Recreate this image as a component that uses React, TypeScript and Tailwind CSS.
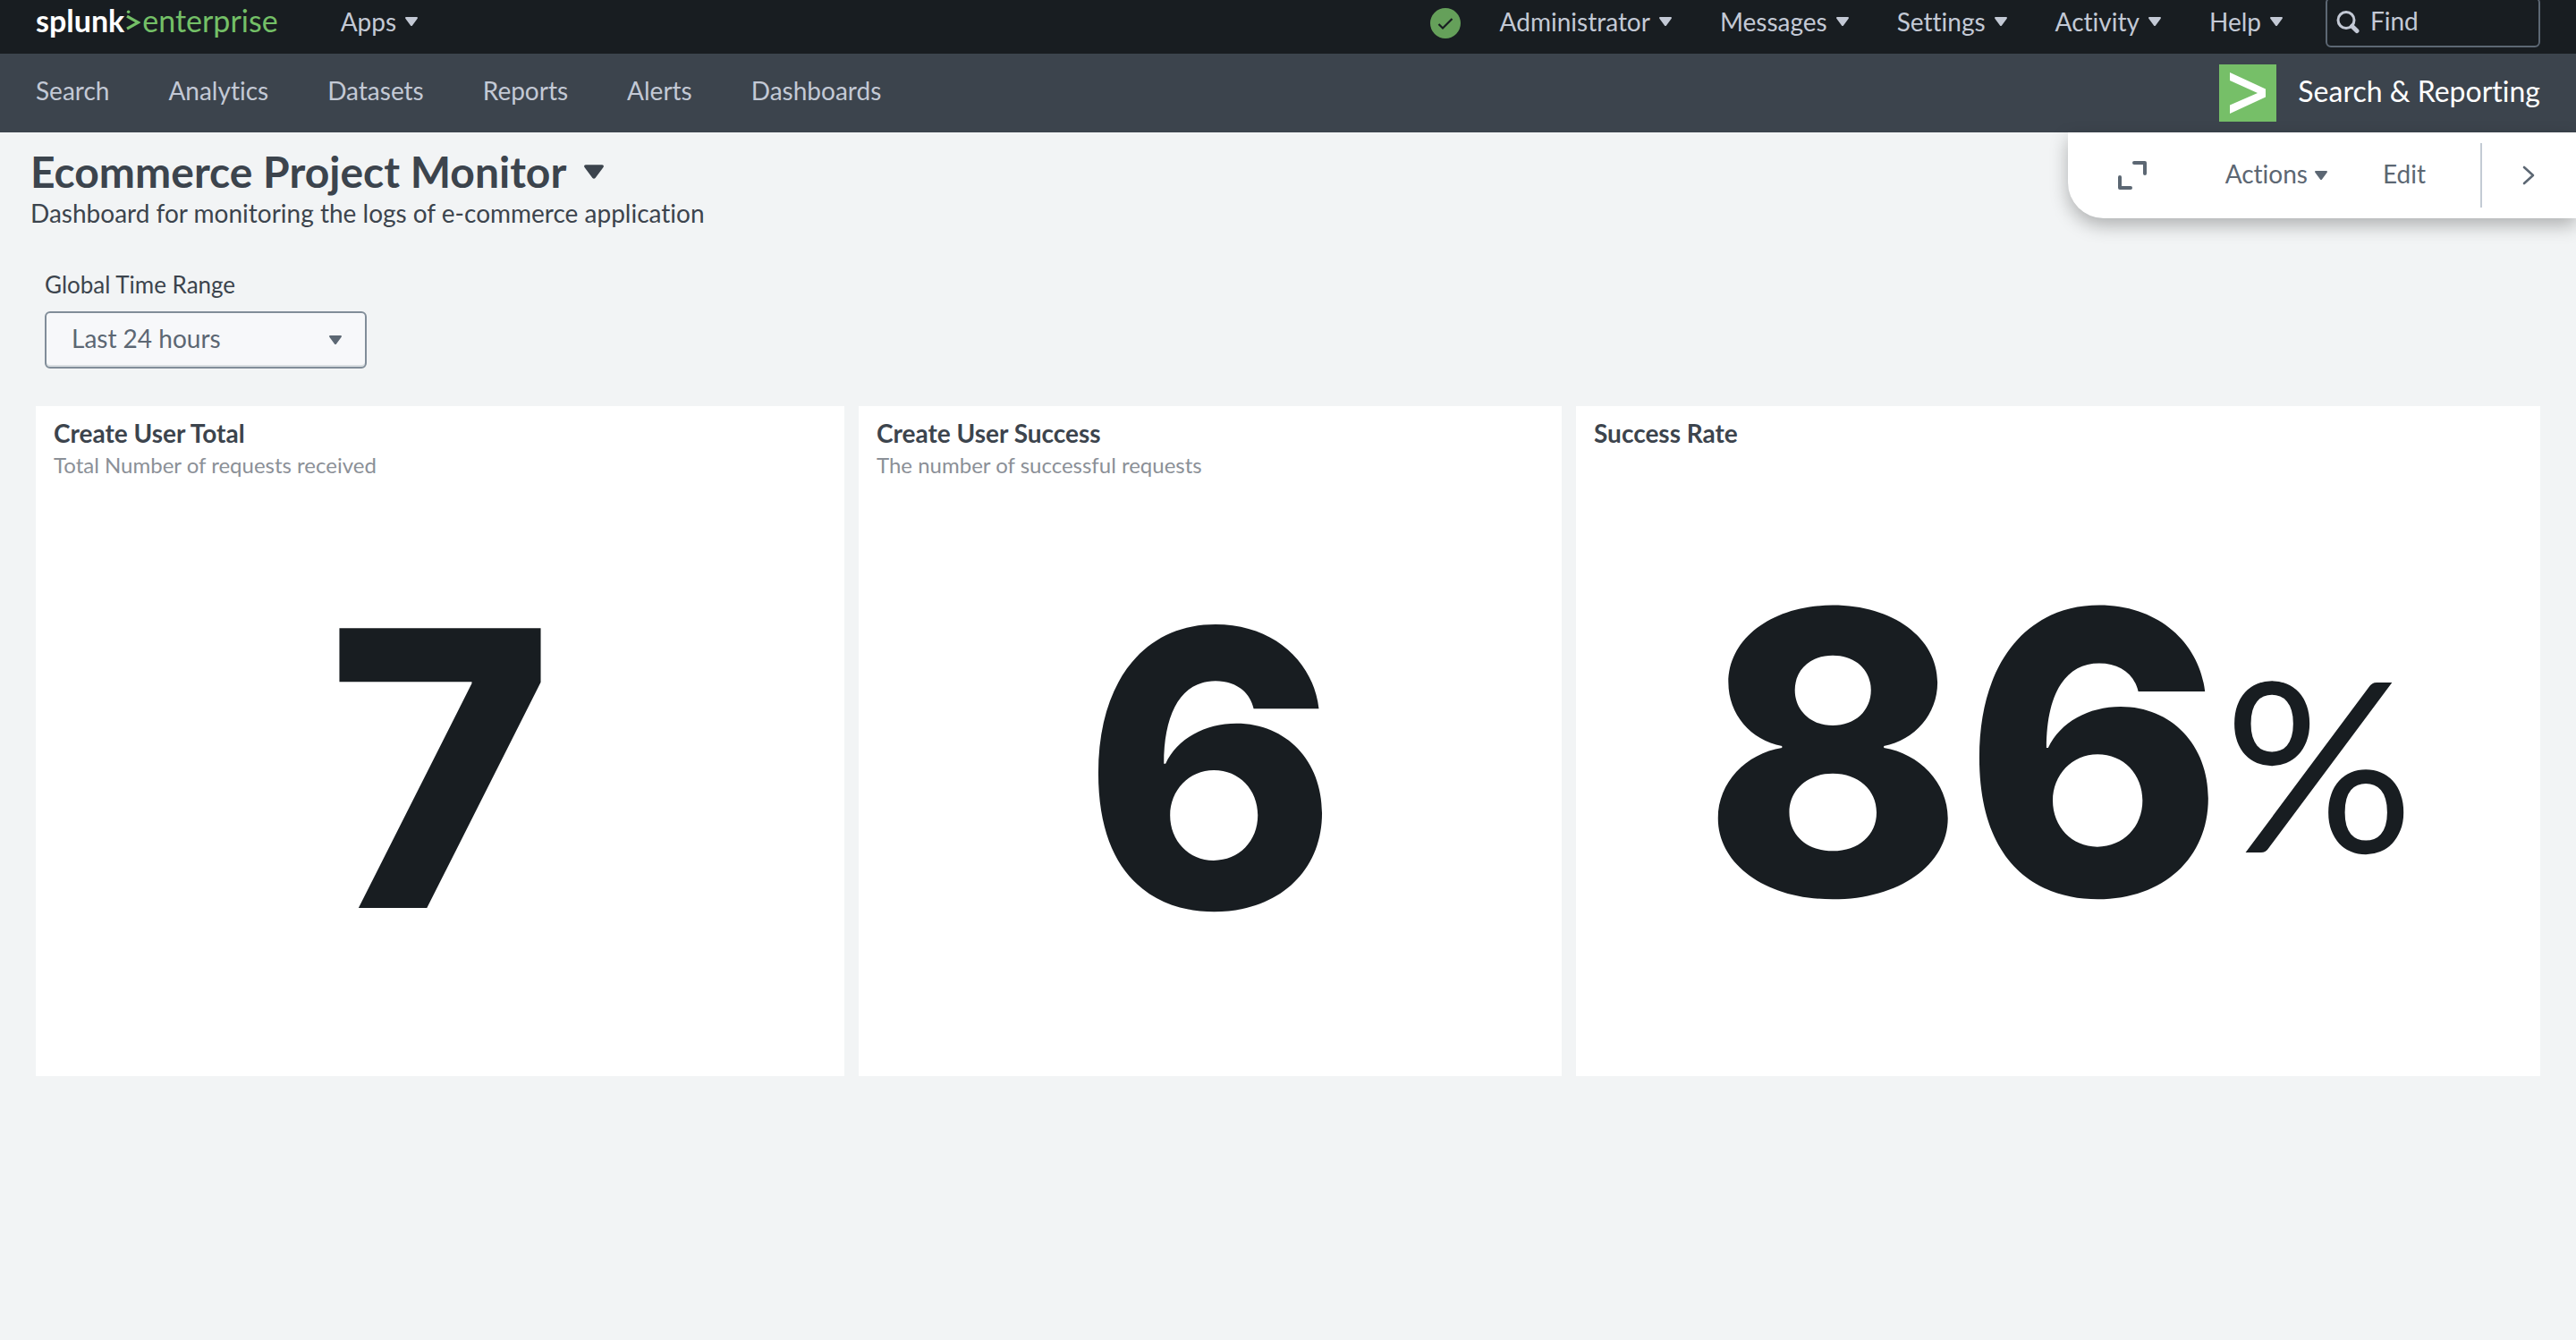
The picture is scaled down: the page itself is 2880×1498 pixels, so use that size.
import { useState } from "react";

function Caret({ className }: { className: string }) {
  return (
    <svg viewBox="0 0 14 10" className={className} fill="currentColor" aria-hidden="true">
      <path d="M1.2 0h11.6c1 0 1.5 1 .9 1.8L8 9.4c-.5.7-1.5.7-2 0L.3 1.8C-.3 1 .2 0 1.2 0z" />
    </svg>
  );
}

const menus = ["Administrator", "Messages", "Settings", "Activity", "Help"];
const tabs = ["Search", "Analytics", "Datasets", "Reports", "Alerts", "Dashboards"];

function Logo() {
  return (
    <a href="#" className="flex items-center pb-1.5 leading-10" aria-label="splunk enterprise">
      <span className="text-[34px] font-bold text-white">splunk</span>
      <svg viewBox="0 0 16 24" className="mx-0.5 h-6 w-4" fill="none" aria-hidden="true">
        <path d="M1 7.2 13.4 14.2 1 21.2" stroke="#74c067" strokeWidth="3.2" />
        <circle cx="2.6" cy="2.2" r="1.8" fill="#74c067" />
      </svg>
      <span className="text-[34px] text-[#74c067]">enterprise</span>
    </a>
  );
}

function TopBar() {
  return (
    <header className="flex h-15 items-start justify-between bg-[#181d21] px-10 text-[#c3c9d5]">
      <div className="flex h-13 items-center">
        <Logo />
        <button type="button" className="ml-[70px] flex items-center gap-2.5 pb-1">
          Apps
          <Caret className="h-2.5 w-3.5" />
        </button>
      </div>
      <div className="flex h-13 items-center">
        <button type="button" aria-label="Health status" className="mr-11">
          <svg viewBox="0 0 34 34" className="size-[34px]" aria-hidden="true">
            <circle cx="17" cy="17" r="17" fill="#65a05a" />
            <path d="M9.5 18l4.5 4.5L24.5 12" fill="none" stroke="#181d21" strokeWidth="2.2" />
          </svg>
        </button>
        <nav className="mr-12 flex gap-[54px] pb-1">
          {menus.map((m) => (
            <button key={m} type="button" className="flex items-center gap-2.5">
              {m}
              <Caret className="h-2.5 w-3.5" />
            </button>
          ))}
        </nav>
        <label className="-mt-0.5 flex h-14 w-60 items-center gap-3 rounded-md border-2 border-[#5c6773] px-2.5">
          <svg viewBox="0 0 26 26" className="size-[26px] shrink-0" fill="none" stroke="currentColor" aria-hidden="true">
            <circle cx="11" cy="10.5" r="9" strokeWidth="3" />
            <path d="M17.6 17.2 23 22.6" strokeWidth="5" strokeLinecap="round" />
          </svg>
          <input
            type="text"
            aria-label="Find"
            placeholder="Find"
            className="w-full min-w-0 bg-transparent pb-1 outline-none placeholder:text-[#c3c9d5]"
          />
        </label>
      </div>
    </header>
  );
}

function AppBar() {
  return (
    <div className="flex h-22 items-center justify-between bg-[#3c444d] px-10">
      <nav className="flex gap-[66px] pb-1.5 text-[#c3c9d5]">
        {tabs.map((t) => (
          <a key={t} href="#">
            {t}
          </a>
        ))}
      </nav>
      <a href="#" className="flex items-center gap-6 text-[32px] text-white">
        <svg viewBox="0 0 64 64" className="size-16" aria-hidden="true">
          <path fill="#76bf68" d="M0 0h64v64H0z" />
          <path fill="#fff" d="M12 9 52 27.5v9L12 55v-9.5L43 32 12 18z" />
        </svg>
        <span className="pb-1">Search &amp; Reporting</span>
      </a>
    </div>
  );
}

function Toolbar() {
  return (
    <div className="flex h-24 items-center rounded-bl-[40px] bg-white pr-[46px] pl-14 text-[#5c6773] shadow-[0_8px_20px_rgba(0,0,0,0.28)]">
      <button type="button" aria-label="Full screen">
        <svg viewBox="0 0 32 32" className="size-8" fill="none" stroke="currentColor" strokeWidth="4" strokeLinecap="round" strokeLinejoin="round" aria-hidden="true">
          <path d="M18 2h12v12M14 30H2V18" />
        </svg>
      </button>
      <button type="button" className="ml-[88px] flex items-center gap-2">
        <span className="pb-1">Actions</span>
        <Caret className="h-2.5 w-3.5" />
      </button>
      <button type="button" className="ml-[62px] pb-1">
        Edit
      </button>
      <div className="ml-[61px] h-18 w-0.5 bg-[#c3cbd4]" />
      <button type="button" aria-label="Collapse toolbar" className="ml-[45px]">
        <svg viewBox="0 0 14 22" className="h-[22px] w-3.5" fill="none" stroke="currentColor" strokeWidth="2.6" strokeLinecap="round" strokeLinejoin="round" aria-hidden="true">
          <path d="M2 2l10 9-10 9" />
        </svg>
      </button>
    </div>
  );
}

type PanelProps = { title: string; description?: string; value: string; unit?: string };

function Panel({ title, description, value, unit }: PanelProps) {
  return (
    <section className="flex min-h-[749px] flex-col bg-white px-5 pt-3 pb-6">
      <h2 className="leading-9 font-bold">{title}</h2>
      {description && <p className="text-2xl leading-9 text-[#8b9097]">{description}</p>}
      <div className="flex grow items-center justify-center text-[#181d21]">
        <span className={"font-['Inter',sans-serif] leading-none font-extrabold " + (unit ? "text-[440px]" : "text-[430px]")}>
          {value}
        </span>
        {unit && <span className="mt-5 text-[265px] leading-none">{unit}</span>}
      </div>
    </section>
  );
}

export default function App() {
  const [range, setRange] = useState("Last 24 hours");
  return (
    <div className="min-h-screen bg-[#f2f4f5] font-['Lato',sans-serif] text-[28px] text-[#3c444d] [font-variant-ligatures:none]">
      <TopBar />
      <AppBar />
      <main>
        <div className="flex items-start justify-between">
          <div className="pt-4 pl-[34px]">
            <h1 className="text-5xl leading-14 font-bold">
              <button type="button" className="flex items-center gap-5">
                Ecommerce Project Monitor
                <Caret className="h-4 w-[22px]" />
              </button>
            </h1>
            <p className="leading-9">Dashboard for monitoring the logs of e-commerce application</p>
          </div>
          <Toolbar />
        </div>
        <div className="mt-11 ml-[50px] w-90">
          <label htmlFor="range" className="block text-[26px] leading-9">
            Global Time Range
          </label>
          <div className="mt-3 grid items-center text-[#5c6773]">
            <select
              id="range"
              value={range}
              onChange={(e) => setRange(e.target.value)}
              className="col-start-1 row-start-1 h-16 w-full appearance-none rounded-md border-2 border-[#818d99] bg-[#f7f8fa] px-7 pb-1 shadow-[inset_0_-2px_0_#dadfe2]"
            >
              <option>Last 24 hours</option>
              <option>Last 7 days</option>
              <option>All time</option>
            </select>
            <Caret className="pointer-events-none col-start-1 row-start-1 mr-7 h-2.5 w-3.5 justify-self-end" />
          </div>
        </div>
        <div className="mx-10 mt-[42px] grid grid-cols-[904fr_786fr_1078fr] gap-4">
          <Panel title="Create User Total" description="Total Number of requests received" value="7" />
          <Panel title="Create User Success" description="The number of successful requests" value="6" />
          <Panel title="Success Rate" value="86" unit="%" />
        </div>
      </main>
    </div>
  );
}
